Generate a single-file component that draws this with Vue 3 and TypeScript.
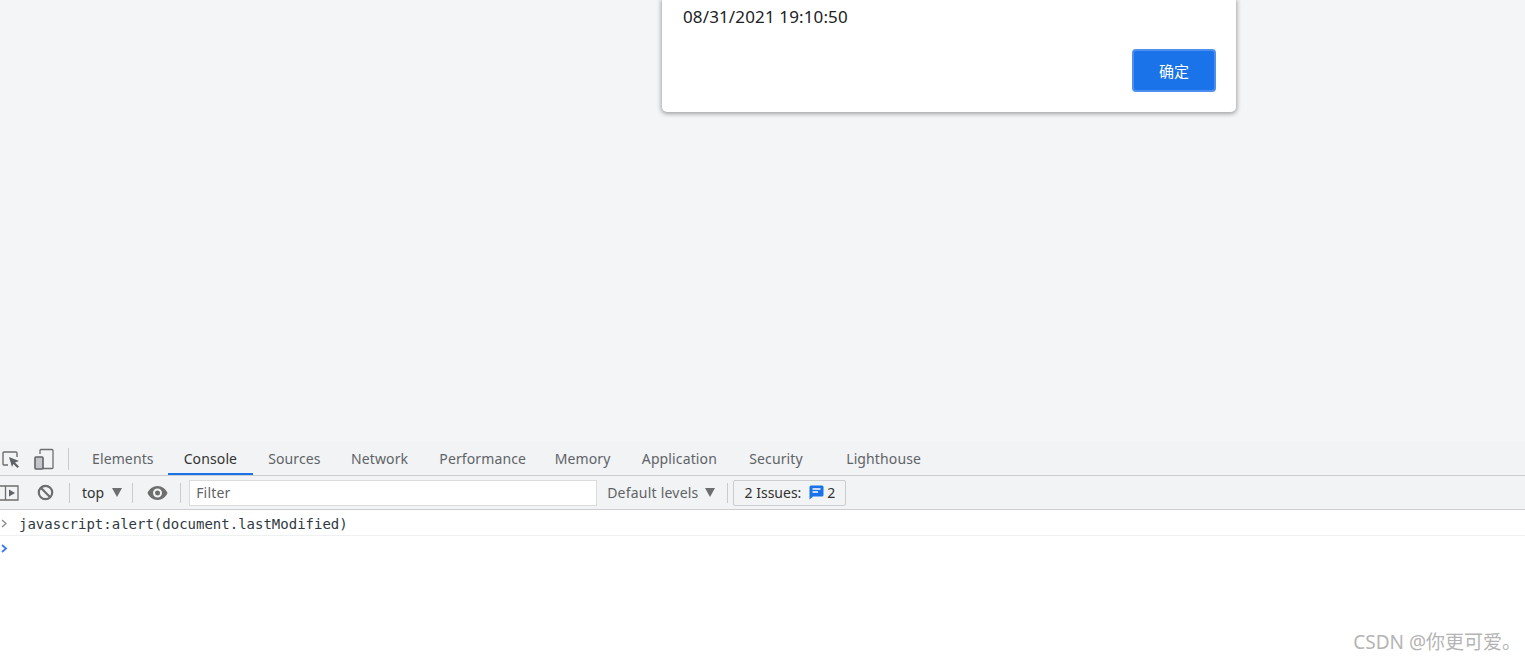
<script setup lang="ts">
const tabs: string[] = ['Elements', 'Console', 'Sources', 'Network', 'Performance', 'Memory', 'Application', 'Security', 'Lighthouse']
</script>

<template>
  <div class="page">
    <section class="viewport">
      <div class="dialog">
        <p class="stamp">08/31/2021 19:10:50</p>
        <div class="actions"><button class="ok">确定</button></div>
      </div>
    </section>
    <section class="devtools">
      <div class="tabbar">
        <svg class="ic-inspect" width="20" height="20" viewBox="0 0 20 20" fill="none">
          <path d="M7 16H3a1 1 0 0 1-1-1V4a1 1 0 0 1 1-1h12a1 1 0 0 1 1 1v4" stroke="#6e6e6e" stroke-width="1.4"/>
          <path d="M8 8l10 4-4 1.4 4 4-1.6 1.6-4-4L11 18z" fill="#5f6368"/>
        </svg>
        <svg class="ic-device" width="20" height="22" viewBox="0 0 20 22" fill="none">
          <path d="M6 6V2.500a1 1 0 0 1 1-1h11a1 1 0 0 1 1 1v17a1 1 0 0 1-1 1H9" stroke="#6e6e6e" stroke-width="1.300"/>
          <rect x="1" y="9" width="8" height="12" rx="1" fill="#c4c6c9" stroke="#5f6368" stroke-width="1.600"/>
        </svg>
        <span class="sep tall"></span>
        <nav class="tabs">
          <a v-for="t in tabs" :key="t" class="tab" :class="{ active: t === 'Console' }">{{ t }}</a>
        </nav>
      </div>
      <div class="toolbar">
        <svg class="ic-side" width="19" height="16" viewBox="0 0 19 16" fill="none">
          <path d="M0 1h18v14H0M5.500 1v14" stroke="#6e6e6e" stroke-width="1.300"/>
          <path d="M9 4.500l6 3.500-6 3.500z" fill="#5f6368"/>
        </svg>
        <svg class="ic-clear" width="17" height="17" viewBox="0 0 17 17" fill="none">
          <circle cx="8.500" cy="8.500" r="6.700" stroke="#6e6e6e" stroke-width="2.200"/>
          <path d="M3.800 3.800l9.400 9.400" stroke="#6e6e6e" stroke-width="2.200"/>
        </svg>
        <span class="sep s1"></span>
        <span class="ctx">top</span>
        <span class="tri"></span>
        <span class="sep s2"></span>
        <svg class="ic-eye" width="21" height="14" viewBox="0 0 21 14">
          <path fill-rule="evenodd" fill="#6e6e6e" d="M10.500 0C6 0 2.200 2.900.500 7c1.700 4.100 5.500 7 10 7s8.300-2.900 10-7c-1.700-4.100-5.500-7-10-7zm0 11.500a4.500 4.500 0 1 1 0-9 4.500 4.500 0 0 1 0 9zm0-2a2.500 2.500 0 1 0 0-5 2.500 2.500 0 0 0 0 5z"/>
        </svg>
        <span class="sep s3"></span>
        <div class="filter">Filter</div>
        <span class="levels">Default levels</span>
        <span class="tri t2"></span>
        <span class="sep s4"></span>
        <div class="issues">
          <span>2 Issues:</span>
          <svg class="ic-msg" width="15" height="15" viewBox="0 0 15 15">
            <path fill="#1a73e8" d="M2 .5h11a1.500 1.500 0 0 1 1.500 1.500v8a1.500 1.500 0 0 1-1.500 1.500H4l-3.500 3V2A1.500 1.500 0 0 1 2 .5z"/>
            <path d="M3.500 4h8M3.500 7h5.500" stroke="#fff" stroke-width="1.400"/>
          </svg>
          <span class="count">2</span>
        </div>
      </div>
      <div class="log">
        <div class="row entry">
          <svg class="chev low" width="7" height="9" viewBox="0 0 7 9" fill="none"><path d="M1 1l4 3.500L1 8" stroke="#8a8a8a" stroke-width="1.300"/></svg>
          <code>javascript:alert(document.lastModified)</code>
        </div>
        <div class="row prompt">
          <svg class="chev" width="7" height="9" viewBox="0 0 7 9" fill="none"><path d="M1 1l4 3.500L1 8" stroke="#3879f0" stroke-width="1.800"/></svg>
        </div>
        <div class="mark">CSDN @你更可爱。</div>
      </div>
    </section>
  </div>
</template>

<style>
html, body { margin: 0; background: #fff; overflow: hidden; }
</style>

<style scoped>
.page {
  width: 1525px;
  height: 661px;
  display: flex;
  flex-direction: column;
  font-family: "Noto Sans", "Noto Sans CJK SC", sans-serif;
  overflow: hidden;
}
.viewport { height: 442px; background: #f4f5f7; flex: none; }
.dialog {
  margin-left: 662px;
  width: 574px;
  height: 112px;
  box-sizing: border-box;
  background: #fff;
  border-radius: 0 0 5px 5px;
  box-shadow: 0 1px 4px 1px rgba(60, 64, 67, .45);
  padding: 6px 20px 20px 21px;
  display: flex;
  flex-direction: column;
  justify-content: space-between;
}
.stamp { margin: 0; font-size: 17px; letter-spacing: .13px; line-height: 22px; color: #202124; }
.actions { display: flex; justify-content: flex-end; }
.ok {
  width: 84px;
  height: 43px;
  background: #1a73e8;
  border: 2px solid #4d8ff0;
  border-radius: 4px;
  color: #fff;
  font: 15px "Noto Sans CJK SC", sans-serif;
  padding: 0;
}
.devtools { flex: 1; display: flex; flex-direction: column; min-height: 0; }
.tabbar {
  height: 33px;
  background: #f1f3f4;
  border-bottom: 1px solid #cbcdd1;
  display: flex;
  align-items: center;
  flex: none;
}
.ic-inspect { margin-left: 1px; flex: none; }
.ic-device { margin-left: 13px; flex: none; }
.sep { width: 1px; height: 20px; background: #c8cacd; flex: none; }
.sep.tall { height: 22px; margin-left: 14px; }
.tabs { display: flex; margin-left: 8px; height: 100%; }
.tab {
  padding: 0 15.2px;
  font-size: 14px;
  letter-spacing: .12px;
  line-height: 33px;
  color: #5f6368;
  box-sizing: border-box;
  height: 33px;
}
.tab:first-child { padding-left: 15px; padding-right: 14.800px; }
.tab:nth-child(2) { padding-right: 15.800px; }
.tab:nth-child(4) { margin-right: .8px; }
.tab:nth-child(5) { margin-right: -1.800px; }
.tab:nth-child(6) { margin-right: 1px; }
.tab:nth-child(7) { margin-right: 2px; }
.tab:nth-child(8) { margin-right: 13px; }
.tab.active { color: #333; border-bottom: 2px solid #1a73e8; }
.toolbar {
  height: 33px;
  background: #f1f3f4;
  border-bottom: 1px solid #cbcdd1;
  display: flex;
  align-items: center;
  flex: none;
  font-size: 14px;
  color: #5f6368;
}
.ic-side { flex: none; }
.ic-clear { margin-left: 18px; flex: none; }
.s1 { margin-left: 15px; }
.ctx { margin-left: 12px; color: #333; }
.tri {
  margin-left: 8px;
  width: 0;
  height: 0;
  border-left: 5px solid transparent;
  border-right: 5px solid transparent;
  border-top: 9px solid #6e6e6e;
  flex: none;
}
.s2 { margin-left: 10px; }
.ic-eye { margin-left: 14px; flex: none; }
.s3 { margin-left: 12px; }
.filter {
  margin-left: 8px;
  width: 408px;
  height: 26px;
  box-sizing: border-box;
  background: #fff;
  border: 1px solid #d9dbdd;
  padding-left: 6px;
  line-height: 24px;
  letter-spacing: .2px;
  color: #5f6368;
  flex: none;
}
.levels { margin-left: 10px; letter-spacing: .22px; }
.t2 { margin-left: 6px; }
.s4 { margin-left: 12px; }
.issues {
  margin-left: 5px;
  width: 113px;
  height: 26px;
  box-sizing: border-box;
  border: 1px solid #cbcdd1;
  border-radius: 2px;
  display: flex;
  align-items: center;
  padding-left: 11px;
  color: #333;
}
.ic-msg { margin-left: 8px; flex: none; }
.count { margin-left: 3px; }
.log { flex: 1; position: relative; background: #fff; }
.row { display: flex; align-items: center; padding-left: 1px; box-sizing: border-box; }
.entry { height: 26px; border-bottom: 1px solid #eff0f1; }
.prompt { height: 24px; }
.chev { flex: none; }
.chev.low { margin-top: 2px; }
code {
  margin-left: 11px;
  padding-top: 2px;
  font: 14px/18px "DejaVu Sans Mono", monospace;
  color: #303942;
}
.mark {
  position: absolute;
  right: 4px;
  bottom: 7px;
  font-size: 19px;
  line-height: 24px;
  color: #b4b4b4;
}
</style>
